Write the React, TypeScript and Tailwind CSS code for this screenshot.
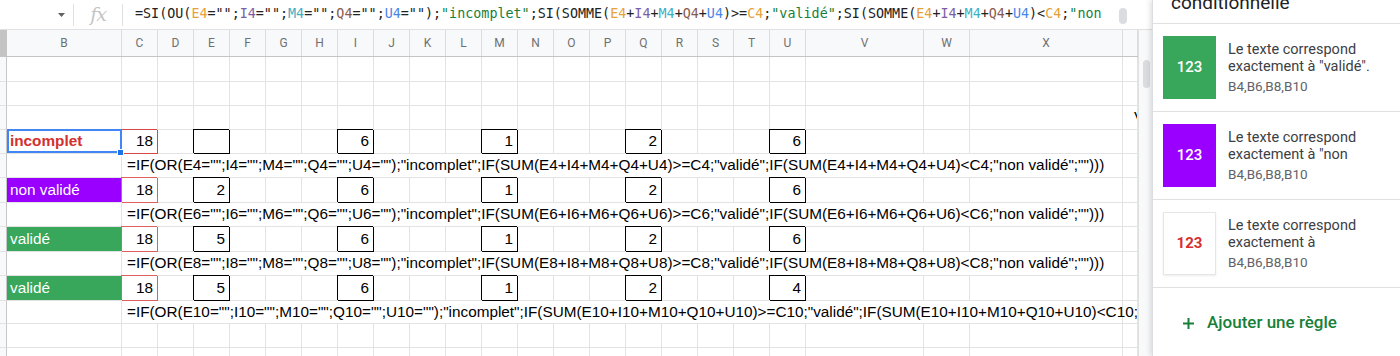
import React from "react";

const colW = [
  "w-[115px]",
  "w-9","w-9","w-9","w-9","w-9","w-9","w-9","w-9","w-9","w-9",
  "w-9","w-9","w-9","w-9","w-9","w-9","w-9","w-9","w-9",
  "w-[118px]","w-[46px]","w-[153px]","w-[15px]",
];
const letters = ["B","C","D","E","F","G","H","I","J","K","L","M","N","O","P","Q","R","S","T","U","V","W","X",""];

const rowH = [
  "h-[25px]","h-6","h-6","h-6","h-6","h-[25px]","h-6","h-[25px]","h-6","h-[25px]","h-[23px]","h-6","h-[30px]",
];

const CELL = "shrink-0 border-r border-b border-[#e2e3e3] flex items-center";
const BOX = "shrink-0 border-r border-b border-black flex items-center justify-end pr-[4px] shadow-[-1px_-1px_0_0_#000]";

const boxIdx = [3, 7, 11, 15, 19];

type DataRowDef = { kind: "data"; b: "incomplet" | "non" | "ok"; vals: string[] };
type FormulaRowDef = { kind: "formula"; n: string };
type EmptyRowDef = { kind: "empty"; y?: string };
type RowDef = DataRowDef | FormulaRowDef | EmptyRowDef;

const rows: RowDef[] = [
  { kind: "empty" },
  { kind: "empty" },
  { kind: "empty", y: "V" },
  { kind: "data", b: "incomplet", vals: ["", "6", "1", "2", "6"] },
  { kind: "formula", n: "4" },
  { kind: "data", b: "non", vals: ["2", "6", "1", "2", "6"] },
  { kind: "formula", n: "6" },
  { kind: "data", b: "ok", vals: ["5", "6", "1", "2", "6"] },
  { kind: "formula", n: "8" },
  { kind: "data", b: "ok", vals: ["5", "6", "1", "2", "4"] },
  { kind: "formula", n: "10" },
  { kind: "empty" },
  { kind: "empty" },
];

function RowHeader({ h }: { h: string }) {
  return <div className={`${h} w-[7px] shrink-0 bg-[#f8f9fa] border-r border-b border-r-[#c7c7c7] border-b-[#e2e3e3]`} />;
}

function BCell({ h, b }: { h: string; b: DataRowDef["b"] }) {
  if (b === "incomplet") {
    return (
      <div className={`${CELL} ${h} ${colW[0]} relative pl-[3px]`}>
        <span className="font-bold text-[#d32f2f]">incomplet</span>
        <div className="absolute -top-px left-0 -right-px bottom-0 border-2 border-[#4285f4] z-10 pointer-events-none" />
        <div className="absolute -right-[3px] -bottom-[3px] w-[7px] h-[7px] bg-[#1a73e8] border border-white z-10" />
      </div>
    );
  }
  if (b === "non") {
    return (
      <div className={`${CELL} ${h} ${colW[0]} bg-[#9900ff] pl-[3px] text-white`}>non validé</div>
    );
  }
  return <div className={`${CELL} ${h} ${colW[0]} bg-[#38a65b] pl-[3px] text-white`}>validé</div>;
}

function DataRow({ h, def }: { h: string; def: DataRowDef }) {
  const cells: React.ReactNode[] = [];
  for (let i = 1; i < colW.length; i++) {
    if (i === 1) {
      const red = def.b === "incomplet" ? "border-[#d94545] shadow-[-1px_-1px_0_0_#d94545]" : "border-[#e06060] shadow-[-1px_-1px_0_0_#e06060]";
      cells.push(
        <div key={i} className={`shrink-0 border-r border-b flex items-center justify-end pr-[4px] ${red} ${h} ${colW[i]}`}>
          18
        </div>
      );
    } else if (boxIdx.includes(i)) {
      const v = def.vals[boxIdx.indexOf(i)];
      cells.push(
        <div key={i} className={`${BOX} ${h} ${colW[i]}`}>
          {v}
        </div>
      );
    } else {
      cells.push(<div key={i} className={`${CELL} ${h} ${colW[i]}`} />);
    }
  }
  return (
    <div className="flex">
      <RowHeader h={h} />
      <BCell h={h} b={def.b} />
      {cells}
    </div>
  );
}

function FormulaRow({ h, n }: { h: string; n: string }) {
  const f = `=IF(OR(E${n}="";I${n}="";M${n}="";Q${n}="";U${n}="");"incomplet";IF(SUM(E${n}+I${n}+M${n}+Q${n}+U${n})>=C${n};"validé";IF(SUM(E${n}+I${n}+M${n}+Q${n}+U${n})<C${n};"non validé";"")))`;
  return (
    <div className="flex">
      <RowHeader h={h} />
      <div className={`${CELL} ${h} ${colW[0]}`} />
      <div className={`${CELL} ${h} w-[1001px] pl-[5px] overflow-visible whitespace-nowrap`}>{f}</div>
      <div className={`${CELL} ${h} ${colW[23]}`} />
    </div>
  );
}

function EmptyRow({ h, y }: { h: string; y?: string }) {
  return (
    <div className="flex">
      <RowHeader h={h} />
      {colW.map((w, i) => (
        <div key={i} className={`${CELL} ${h} ${w} ${i === 23 ? "overflow-hidden pl-[11px]" : ""}`}>
          {i === 23 && y ? <span>{y}</span> : null}
        </div>
      ))}
    </div>
  );
}

function FormulaBar() {
  const E = "text-[#e6a13a]";
  const I = "text-[#7b5ea7]";
  const M = "text-[#3fb0c6]";
  const Q = "text-[#8a5a4e]";
  const U = "text-[#4a86e8]";
  const G = "text-[#188038]";
  return (
    <div className="h-[30px] border-b border-[#e0e0e0] flex items-center bg-white relative">
      <div className="w-[73px] h-full flex items-center justify-end pr-[8px] shrink-0">
        <svg width="7" height="4" viewBox="0 0 7 4"><path d="M0 0 L7 0 L3.5 4 Z" fill="#606060" /></svg>
      </div>
      <div className="w-px h-[22px] bg-[#e0e0e0] shrink-0" />
      <div className="w-[48px] shrink-0 flex items-center justify-center">
        <span className="font-['DejaVu_Serif',serif] italic text-[19px] text-[#c4c4c4] leading-none tracking-[-1px]">fx</span>
      </div>
      <div className="w-px h-[22px] bg-[#e0e0e0] shrink-0" />
      <div className="pl-[12px] whitespace-nowrap font-['DejaVu_Sans_Mono','Liberation_Mono',monospace] text-[13.38px] text-[#222]">
        =SI(OU(<span className={E}>E4</span>="";<span className={I}>I4</span>="";<span className={M}>M4</span>="";<span className={Q}>Q4</span>="";<span className={U}>U4</span>="");<span className={G}>"incomplet"</span>;SI(SOMME(<span className={E}>E4</span>+<span className={I}>I4</span>+<span className={M}>M4</span>+<span className={Q}>Q4</span>+<span className={U}>U4</span>)&gt;=<span className={E}>C4</span>;<span className={G}>"validé"</span>;SI(SOMME(<span className={E}>E4</span>+<span className={I}>I4</span>+<span className={M}>M4</span>+<span className={Q}>Q4</span>+<span className={U}>U4</span>)&lt;<span className={E}>C4</span>;<span className={G}>"non</span>
      </div>
      <div className="absolute left-[1119px] top-[8px] w-[8px] h-[16px] rounded-full bg-[#dadce0]" />
    </div>
  );
}

function HeaderRow() {
  return (
    <div className="flex h-[27px] border-b border-[#c4c4c4] bg-[#f8f9fa]">
      <div className="w-[7px] h-full shrink-0 bg-[#c4c4c4]" />
      {colW.map((w, i) => (
        <div key={i} className={`${w} h-full shrink-0 border-r border-[#dadce0] flex items-center justify-center text-[12px] text-[#707070] font-['Roboto',sans-serif]`}>
          {letters[i]}
        </div>
      ))}
    </div>
  );
}

function Card({ swatch, children }: { swatch: React.ReactNode; children: React.ReactNode }) {
  return (
    <div className="flex h-[88px] border-b border-[#e0e0e0] pl-[10px] pt-3">
      {swatch}
      <div className="ml-3 pr-[10px] pt-[5px] flex-1 min-w-0">
        <div className="text-[14.5px] leading-[17px] text-[#3c4043] max-h-[34px] overflow-hidden">{children}</div>
        <div className="text-[13.5px] leading-[17px] mt-[3px] text-[#5f6368]">B4,B6,B8,B10</div>
      </div>
    </div>
  );
}

function Panel() {
  return (
    <div className="w-[248px] shrink-0 h-[356px] bg-white border-l border-[#dadce0] shadow-[-2px_0_5px_rgba(0,0,0,0.12)] relative z-20 font-['Roboto',sans-serif] overflow-hidden">
      <div className="h-[24px] border-b border-[#e0e0e0] overflow-hidden">
        <div className="pl-[18px] -mt-[9px] text-[19px] leading-6 text-[#202124]">conditionnelle</div>
      </div>
      <Card
        swatch={<div className="w-[53px] h-[63px] shrink-0 bg-[#38a65b] flex items-center justify-center text-white text-[15px] font-medium">123</div>}
      >
        Le texte correspond exactement à "validé".
      </Card>
      <Card
        swatch={<div className="w-[53px] h-[63px] shrink-0 bg-[#9900ff] flex items-center justify-center text-white text-[15px] font-medium">123</div>}
      >
        Le texte correspond exactement à "non validé".
      </Card>
      <Card
        swatch={<div className="w-[53px] h-[63px] shrink-0 bg-white border border-[#e6e6e6] shadow-[0_1px_2px_rgba(0,0,0,0.08)] flex items-center justify-center text-[#d32f2f] text-[15px] font-bold">123</div>}
      >
        Le texte correspond exactement à "incomplet".
      </Card>
      <div className="flex items-center h-[70px] pl-[30px] gap-[13px] text-[#188038]">
        <svg width="11" height="11" viewBox="0 0 11 11">
          <path d="M5.5 0 V11 M0 5.5 H11" stroke="#188038" strokeWidth="2" />
        </svg>
        <span className="text-[17px] font-medium">Ajouter une règle</span>
      </div>
    </div>
  );
}

export default function App() {
  return (
    <div className="w-[1400px] h-[356px] overflow-hidden flex bg-white font-['Liberation_Sans',Arial,sans-serif] text-[15.3px] text-black">
      <div className="w-[1152px] shrink-0 flex flex-col">
        <FormulaBar />
        <div className="flex flex-1 min-h-0">
          <div className="w-[1138px] shrink-0 overflow-hidden">
            <HeaderRow />
            {rows.map((r, idx) => {
              const h = rowH[idx];
              if (r.kind === "data") return <DataRow key={idx} h={h} def={r} />;
              if (r.kind === "formula") return <FormulaRow key={idx} h={h} n={r.n} />;
              return <EmptyRow key={idx} h={h} y={r.y} />;
            })}
          </div>
          <div className="w-[14px] shrink-0 bg-[#f8f9fa] border-l border-[#e0e0e0] pt-[30px] pl-[4px]">
            <div className="w-[7px] h-[28px] rounded-full bg-[#dadce0]" />
          </div>
        </div>
      </div>
      <Panel />
    </div>
  );
}
